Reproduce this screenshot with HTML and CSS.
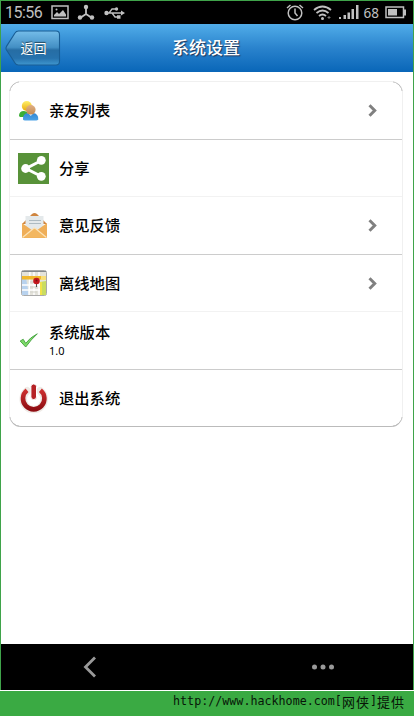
FILE: index.html
```html
<!DOCTYPE html>
<html lang="zh-CN">
<head>
<meta charset="utf-8">
<title>系统设置</title>
<link rel="stylesheet" href="styles.css">
</head>
<body>
<div class="phone">
  <div class="status">
    <span class="clock">15:56</span>
    <svg class="s-photo" width="18" height="15" viewBox="0 0 18 15"><path d="M1 1h16v12.500H1z" fill="none" stroke="#c0c0c0" stroke-width="1.500"/><path d="M3 11.500V10l3-3 2 2 4-4 3 4.500v2z" fill="#c0c0c0"/><circle cx="5.500" cy="4.500" r="1" fill="#c0c0c0"/></svg>
    <svg class="s-node" width="18" height="17" viewBox="0 0 18 17"><path d="M9 3v7L3 14M9 10l6 4" fill="none" stroke="#c0c0c0" stroke-width="1.800"/><g fill="#c0c0c0"><circle cx="9" cy="3" r="2.200"/><circle cx="3" cy="13.500" r="2.200"/><circle cx="15" cy="13.500" r="2.200"/></g></svg>
    <svg class="s-usb" width="21" height="14" viewBox="0 0 21 14"><path d="M2 7h16M5 7l3-4h4M8 7l3 4h3" fill="none" stroke="#c0c0c0" stroke-width="1.300"/><g fill="#c0c0c0"><circle cx="2.500" cy="7" r="2.200"/><circle cx="12.500" cy="3" r="1.700"/><path d="M13 9.200h3.500v3.500H13zM17 4.500l4 2.500-4 2.500z"/></g></svg>
    <span class="spacer"></span>
    <svg class="s-alarm" width="18" height="17" viewBox="0 0 18 17"><g fill="none" stroke="#c0c0c0" stroke-width="1.500"><circle cx="9" cy="9" r="6.800"/><path d="M9 4.500V9l2.500 3M1 4l3.500-3M17 4l-3.500-3"/></g></svg>
    <svg class="s-wifi" width="19" height="16" viewBox="0 0 19 16"><g fill="none" stroke="#c0c0c0" stroke-width="1.800"><path d="M1 5q8.500-7 17 0M3.500 8q6-5 12 0M6 11q3.500-3 7 0"/></g><circle cx="9.500" cy="13.500" r="1.500" fill="#c0c0c0"/><path d="M16 11v3M14.500 12.500h3" stroke="#777"/></svg>
    <svg class="s-signal" width="20" height="15" viewBox="0 0 20 15" fill="#c0c0c0"><path d="M0 12h2v2H0zM4.500 10H7v4H4.500zM8.500 7.500H11V14H8.500zM12.500 4H15v10h-2.500zM17 0h2.500v14H17z"/></svg>
    <span class="percent">68</span>
    <svg class="s-battery" width="22" height="13" viewBox="0 0 22 13"><path d="M1 1h17.500v10.500H1z" fill="none" stroke="#c0c0c0" stroke-width="1.500"/><path d="M3 3h9v6.500H3zM19 3.500h2v6h-2z" fill="#c0c0c0"/></svg>
  </div>

  <header class="header">
    <a class="back">
      <svg class="back-shape" width="56" height="37" viewBox="0 0 56 37"><defs><linearGradient id="bk" x2="0" y2="1"><stop offset="0" stop-color="#75bde9"/><stop offset=".48" stop-color="#438fc4"/><stop offset=".56" stop-color="#266da4"/><stop offset=".8" stop-color="#2672ad"/><stop offset="1" stop-color="#4097cf"/></linearGradient></defs><path d="M13.500 1H51q3.500 0 3.500 3.500v27q0 3.500-3.500 3.500H13.500Q11 35 10 33L1.500 20q-1-1.800 0-3.600L10 3q1.200-2 3.500-2z" fill="url(#bk)" stroke="#195d94" stroke-width="1.100"/></svg>
      <span class="back-text">返回</span>
    </a>
    <h1 class="title">系统设置</h1>
  </header>

  <main class="content">
    <ul class="card">
      <li class="row strong compact">
        <svg class="icon" width="20" height="20" viewBox="0 0 20 20"><defs><linearGradient id="hair" x2="0" y2="1"><stop offset="0" stop-color="#fff06a"/><stop offset="1" stop-color="#e8a90c"/></linearGradient><linearGradient id="face" x2="0" y2="1"><stop offset="0" stop-color="#e0b084"/><stop offset="1" stop-color="#c48a52"/></linearGradient><linearGradient id="blue" x2="0" y2="1"><stop offset="0" stop-color="#3287d2"/><stop offset="1" stop-color="#4ba2e6"/></linearGradient></defs><path d="M0 15q0-5 5-5l4 1-3 5H1z" fill="#3aae35"/><circle cx="7.800" cy="5" r="5" fill="url(#hair)"/><path d="M4 18.500q-.5-6 5-6.500h5q5.500.5 5.300 6.500-1 .9-2 .9H6q-1.500 0-2-.9z" fill="url(#blue)"/><path d="M9 12l2.800 3 2.700-3z" fill="#dcefff"/><circle cx="11.800" cy="8.800" r="4.800" fill="url(#face)"/></svg>
        <span class="label">亲友列表</span>
        <svg class="arrow" width="9" height="13" viewBox="0 0 9 13"><path d="M1.500 1.300L6.700 6.500 1.500 11.700" fill="none" stroke="#808080" stroke-width="3"/></svg>
      </li>
      <li class="row">
        <svg class="icon" width="31" height="31" viewBox="0 0 31 31"><path d="M0 0h31v31H0z" fill="#589239"/><path d="M23.500 7.500L8 15.500l15.500 8" fill="none" stroke="#fff" stroke-width="3"/><g fill="#fff"><circle cx="23.300" cy="7.300" r="4.400"/><circle cx="7.600" cy="15.500" r="4.400"/><circle cx="23.300" cy="23.300" r="4.400"/></g></svg>
        <span class="label">分享</span>
      </li>
      <li class="row strong">
        <svg class="icon" width="31" height="31" viewBox="0 0 31 31"><path d="M4 14L14 4q2.500-2 5 0l10 10z" fill="#cf8540"/><path d="M7.500 6h18v16h-18z" fill="#e4e9eb"/><path d="M11 10.500h12M11 13.500h12" stroke="#aebbc2" stroke-width="1.200"/><path d="M4 13l12.500 9L29 13v15H4z" fill="#efae58"/><path d="M4.500 27.500l11-9q1-.8 2 0l11 9" fill="#f3b760" stroke="#fbe3b8" stroke-width="1.200"/></svg>
        <span class="label">意见反馈</span>
        <svg class="arrow" width="9" height="13" viewBox="0 0 9 13"><path d="M1.500 1.300L6.700 6.500 1.500 11.700" fill="none" stroke="#808080" stroke-width="3"/></svg>
      </li>
      <li class="row">
        <svg class="icon" width="31" height="31" viewBox="-1 0 31 31"><rect x="2.500" y="2.500" width="25" height="25" rx="2" fill="#e4e3db" stroke="#aaa" /><path d="M3 10h4l3 17H3z" fill="#b8d2ee"/><path d="M11 3l-1 24M15 3v24M20 3v24M3 17h24M3 22h24" stroke="#fff" stroke-width="1.500"/><path d="M11 14h7M11 19h7M11 24h7" stroke="#d2d2ca"/><path d="M21 14l6-1v14h-6z" fill="#c9dc61"/><path d="M22 14v13" stroke="#f1e24a" stroke-width="2"/><path d="M3 8h19v3.500H3z" fill="#f2b82d"/><path d="M22 8h5v4h-5z" fill="#f9df79"/><path d="M3 3.500h24" stroke="#85898c"/><path d="M17.500 15.500V19" stroke="#555" stroke-width="1"/><circle cx="17.500" cy="13" r="3.300" fill="#c4171d"/><circle cx="17.500" cy="12.500" r="1" fill="#711"/></svg>
        <span class="label">离线地图</span>
        <svg class="arrow" width="9" height="13" viewBox="0 0 9 13"><path d="M1.500 1.300L6.700 6.500 1.500 11.700" fill="none" stroke="#808080" stroke-width="3"/></svg>
      </li>
      <li class="row strong compact">
        <svg class="icon" width="20" height="20" viewBox="0 0 20 20"><path d="M1.200 10l3-1.700 2.500 4Q11 6.500 18.300 2.800 12 8.500 6.700 16z" fill="#7ddb68" stroke="#4fa84a" stroke-linejoin="round"/></svg>
        <span class="label titled">系统版本<small class="version">1.0</small></span>
      </li>
      <li class="row">
        <svg class="icon" width="31" height="31" viewBox="-.7 0 31 31"><defs><linearGradient id="pw" x2="0" y2="1"><stop offset="0" stop-color="#cc3030"/><stop offset="1" stop-color="#8f0d12"/></linearGradient></defs><g fill="none"><path d="M8.500 7.800a10.500 10.500 0 1 0 13 0" stroke="#efebe7" stroke-width="7.500" stroke-linecap="round"/><path d="M8.300 7.300a10.700 10.700 0 1 0 13.400 0" stroke="url(#pw)" stroke-width="4.600"/></g><rect x="12.200" y="1" width="5.600" height="15.500" rx="2.600" fill="#b62226" stroke="#fff"/></svg>
        <span class="label">退出系统</span>
      </li>
    </ul>
  </main>

  <nav class="nav">
    <svg width="14" height="22" viewBox="0 0 14 22"><path d="M12 1.500L2.500 11 12 20.500" fill="none" stroke="#999" stroke-width="2.800"/></svg>
    <svg width="24" height="6" viewBox="0 0 24 6" fill="#999"><circle cx="3.500" cy="3" r="2.500"/><circle cx="12" cy="3" r="2.500"/><circle cx="20.500" cy="3" r="2.500"/></svg>
  </nav>
</div>
<footer class="credit"><span class="url">http://www.hackhome.com[</span><span class="han">网侠</span><span class="url">]</span><span class="han">提供</span></footer>
</body>
</html>
```
FILE: styles.css
```css
* { box-sizing: border-box; }
body {
  margin: 0;
  width: 414px;
  height: 716px;
  overflow: hidden;
  background: #3aaa43;
  font-family: Roboto, "Noto Sans CJK SC", sans-serif;
}
svg { display: block; flex: none; }
.phone {
  height: 691px;
  padding: 1px 1px 1px;
  background: linear-gradient(#fff, #fff) bottom / 100% 1px no-repeat, #3fa34a;
  display: flex;
  flex-direction: column;
}
.status {
  height: 23px;
  background: #000;
  display: flex;
  align-items: center;
  padding: 0 6px 0 4px;
  color: #c0c0c0;
}
.clock { font-size: 16px; line-height: 22px; width: 46px; letter-spacing: -.5px; }
.s-node { margin-left: 8px; }
.s-usb { margin-left: 9px; }
.spacer { flex: 1; }
.s-wifi { margin-left: 9px; }
.s-signal { margin-left: 7px; }
.percent { font: 13.500px/18px "Noto Sans", sans-serif; margin: 0 6px 0 5px; }
.header {
  height: 48px;
  display: grid;
  grid-template-columns: 58px 1fr 60px;
  align-items: center;
  padding-left: 4px;
  background: linear-gradient(#51ade9, #2a83cd 50%, #0966b8);
  color: #fff;
}
.back { display: grid; place-items: center; width: 56px; height: 37px; }
.back > * { grid-area: 1 / 1; }
.back-text { font-size: 13px; line-height: 20px; padding: 1px 0 0 1px; text-shadow: 0 -1px 1px #245; }
.title { margin: 0; padding-right: 4px; text-align: center; font-size: 17px; line-height: 24px; font-weight: 500; text-shadow: 1px 1px 1px #235; }
.content { flex: 1; background: #fff; padding: 9px 10px 0 8px; }
.card {
  position: relative;
  list-style: none;
  margin: 0;
  padding: 0;
  height: 346px;
  border: 1px solid #f0f0f0;
  border-bottom-color: #bbb;
  border-radius: 12px;
}
/* darker line on the rounded corners only */
.card::after {
  content: "";
  position: absolute;
  inset: -1px;
  border: 1px solid #bbb;
  border-radius: 12px;
  pointer-events: none;
  mask:
    linear-gradient(#000 0 0) 0 0 / 10px 10px no-repeat,
    linear-gradient(#000 0 0) 100% 0 / 10px 10px no-repeat,
    linear-gradient(#000 0 0) 0 100% / 10px 10px no-repeat,
    linear-gradient(#000 0 0) 100% 100% / 10px 10px no-repeat;
}
.row { height: 57px; display: flex; align-items: center; padding: 0 25px 0 8px; border-bottom: 1px solid #f2f2f2; }
.row.strong { height: 58px; border-bottom-color: #ccc; }
.row.compact { padding-left: 9px; }
.row:last-child { height: 56px; border: 0; }
.label { margin-left: 10px; flex: 1; padding-top: 1px; font-size: 15.300px; line-height: 18px; font-weight: 500; color: #000; }
.titled { padding-top: 3px; }
.version { display: block; font: 11px/18px "Noto Sans", sans-serif; }
.nav { height: 46px; background: #000; display: flex; align-items: center; justify-content: space-between; padding: 0 78px 0 82px; }
.credit { height: 25px; display: flex; align-items: center; justify-content: flex-end; padding: 0 9px 4px 0; color: #071507; line-height: 21px; white-space: pre; }
.url { font: 11.700px/21px "DejaVu Sans Mono", monospace; }
.han { font: 13px/21px "Noto Sans CJK SC", sans-serif; letter-spacing: 1px; }
```
